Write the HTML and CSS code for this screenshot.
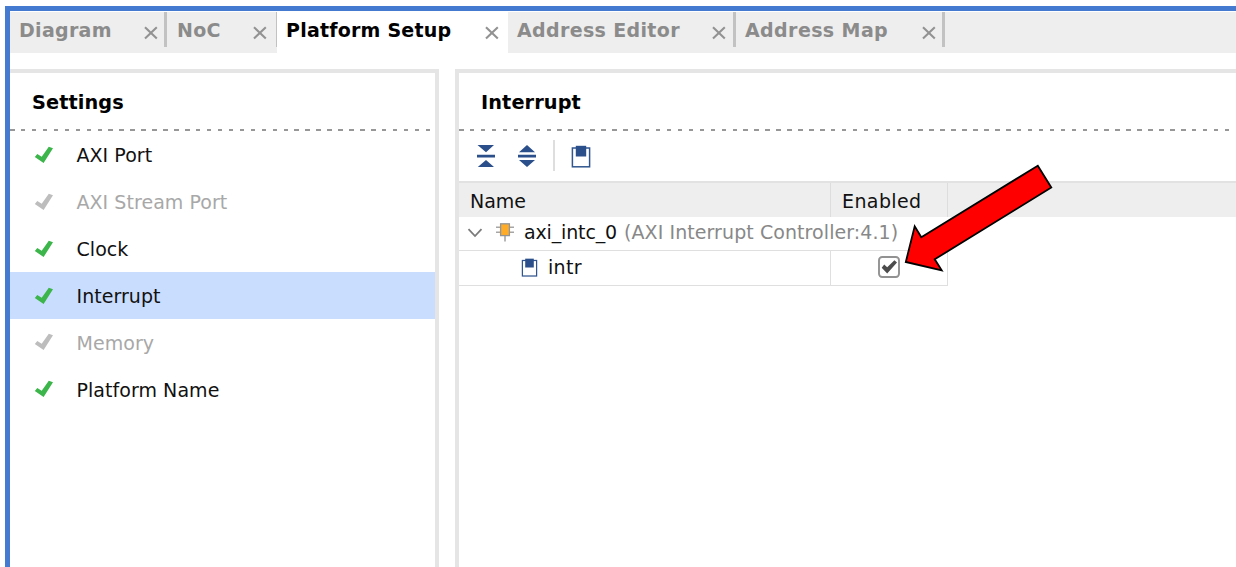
FILE: index.html
```html
<!DOCTYPE html>
<html lang="en">
<head>
<meta charset="utf-8">
<title>Platform Setup</title>
<link rel="stylesheet" href="styles.css">
</head>
<body>
<svg class="defs" width="0" height="0">
  <symbol id="tick" viewBox="0 0 20 18"><path d="M.8 11 3.3 8 7.7 10.8 14.8.8 19 2.3 9.6 17Z" fill="currentColor"/></symbol>
  <symbol id="close" viewBox="0 0 14 14"><path d="M1 1.2 12.8 12.4M12.8 1.2 1 12.4" stroke="currentColor" stroke-width="2.1" fill="none"/></symbol>
  <symbol id="port" viewBox="0 0 20 23"><rect x="1.4" y="3" width="17.2" height="18.8" fill="#fff" stroke="#31558f" stroke-width="1.5"/><rect x="4.8" y=".8" width="10.4" height="10.7" fill="#2b4f8a"/></symbol>
</svg>
<div class="window">
  <nav class="tabs">
    <div class="tab diagram"><span>Diagram</span><svg class="x"><use href="#close"/></svg></div>
    <div class="tab noc"><span>NoC</span><svg class="x"><use href="#close"/></svg></div>
    <div class="tab setup active"><span>Platform Setup</span><svg class="x"><use href="#close"/></svg></div>
    <div class="tab editor"><span>Address Editor</span><svg class="x"><use href="#close"/></svg></div>
    <div class="tab map"><span>Address Map</span><svg class="x"><use href="#close"/></svg></div>
  </nav>
  <main class="panes">
    <section class="settings">
      <h2>Settings</h2>
      <div class="dashes"></div>
      <ul>
        <li><svg class="tick"><use href="#tick"/></svg><span>AXI Port</span></li>
        <li class="off"><svg class="tick"><use href="#tick"/></svg><span>AXI Stream Port</span></li>
        <li><svg class="tick"><use href="#tick"/></svg><span>Clock</span></li>
        <li class="selected"><svg class="tick"><use href="#tick"/></svg><span>Interrupt</span></li>
        <li class="off"><svg class="tick"><use href="#tick"/></svg><span>Memory</span></li>
        <li><svg class="tick"><use href="#tick"/></svg><span>Platform Name</span></li>
      </ul>
    </section>
    <section class="detail">
      <h2>Interrupt</h2>
      <div class="dashes"></div>
      <div class="toolbar">
        <svg class="collapse" width="20" height="24" viewBox="0 0 20 24" fill="#2b4f8a"><path d="M1.5 1H18L10 8.2ZM1 10.7H19V13.6H1ZM1.8 23H18L10 16Z"/></svg>
        <svg class="expand" width="20" height="24" viewBox="0 0 20 24" fill="#2b4f8a"><path d="M2 8.2H18L10 1ZM1 10.7H19V13.6H1ZM2 16H18L10 23Z"/></svg>
        <i class="divider"></i>
        <svg class="ports"><use href="#port"/></svg>
      </div>
      <div class="thead"><span class="name">Name</span><span class="enabled">Enabled</span></div>
      <div class="row parent">
        <svg class="chevron" width="16" height="12" viewBox="0 0 16 12"><path d="M1.5 2.2 8 9 14.5 2.2" fill="none" stroke="#7b7b7b" stroke-width="1.8"/></svg>
        <svg class="chip" width="20" height="20" viewBox="0 0 20 20"><path d="M1 5.3H19M1 10.2H19M10 12V19.5" stroke="#a6a6a6" stroke-width="1.6"/><rect x="5.6" y="1.8" width="8.8" height="11.8" fill="#ffad29" stroke="#949494" stroke-width="1.3"/></svg>
        <span class="core">axi_intc_0</span><span class="type">(AXI Interrupt Controller:4.1)</span>
      </div>
      <div class="row child">
        <div class="cell"><svg class="port"><use href="#port"/></svg><span>intr</span></div>
        <div class="check"><svg width="24" height="24" viewBox="0 0 24 24"><rect x="2" y="2" width="20" height="20" rx="3.2" fill="#fff" stroke="#929292" stroke-width="1.9"/><path d="M4.7 12.7 7.2 9.4 10.2 12.2 17.4 5.2 20 7.5 10.2 18.5Z" fill="#4c4c4c"/></svg></div>
      </div>
    </section>
  </main>
</div>
<svg class="arrow" width="160" height="120" viewBox="900 155 160 120"><path d="M1037.8 165.7 921.3 237.3 914.7 226.3 905.8 262 941.7 270.3 934.7 259.3 1051.3 187.5Z" fill="#f00" stroke="#000" stroke-width="1.8"/></svg>
</body>
</html>
```
FILE: styles.css
```css
* { box-sizing: border-box; }
body { margin: 0; width: 1236px; height: 567px; overflow: hidden; background: #fff; color: #111; font: 19px/24px "DejaVu Sans", sans-serif; white-space: nowrap; }
.defs { position: absolute; }
svg { flex: none; display: block; }
.window { margin: 6px 0 0 5px; height: 561px; border: solid #447ad0; border-width: 5px 0 0 5px; display: flex; flex-direction: column; }
.tabs { display: flex; height: 42px; background: #eee; border-top: 1px solid #fff; flex: none; }
.tab { display: flex; justify-content: space-between; height: 35px; padding: 6px 6px 0 9px; border-right: 3px solid #c2c2c2; color: #8b8b8b; font-weight: bold; letter-spacing: .3px; }
.x { width: 14px; height: 14px; margin-top: 8px; color: #929292; }
.diagram { width: 157px; }
.noc { width: 110px; padding-left: 10px; border-right-width: 1px; padding-right: 9px; }
.setup { width: 231px; height: 41px; padding-right: 9px; border: 0; background: #fff; color: #000; letter-spacing: .22px; }
.editor { width: 228px; letter-spacing: .35px; padding-right: 7px; }
.map { width: 209px; letter-spacing: .4px; }
.panes { display: flex; gap: 16px; margin-top: 16px; flex: 1; }
.settings { width: 429px; border: solid #e5e5e5; border-width: 4px 4px 0 0; }
.detail { flex: 1; border: solid #e5e5e5; border-width: 4px 0 0 4px; }
h2 { margin: 0; height: 56px; padding: 18px 22px 0; font-size: 19.3px; line-height: 24px; color: #000; letter-spacing: .1px; }
.dashes { height: 2px; margin-right: 3px; background: repeating-linear-gradient(90deg, #979797 0 4.5px, #fff 4.5px 10.94px); }
ul { margin: 0; padding: .4px 0 0; list-style: none; }
li { display: flex; height: 46.9px; align-items: center; padding-left: 24px; gap: 22.5px; letter-spacing: .05px; }
li span { padding-top: 1px; }
.tick { width: 20px; height: 18px; color: #3cb54a; }
.off { color: #a8a8a8; }
.off .tick { color: #bdbdbd; }
.selected { background: #c9ddff; }
.toolbar { display: flex; height: 50px; padding: 13px 0 0 17px; }
.expand { margin-left: 21px; }
.divider { width: 2px; height: 31px; margin: -4px 16px 0 16px; background: #dedede; }
.ports { width: 20px; height: 23px; margin-top: 1px; }
.thead { display: flex; height: 36px; background: #eee; border-top: 2px solid #e2e2e2; line-height: 36px; }
.name { width: 372px; height: 34px; padding-left: 11px; border-right: 1px solid #ddd; }
.enabled { width: 117px; height: 34px; padding-left: 11px; border-right: 1px solid #ddd; letter-spacing: .4px; }
.row { display: flex; width: 489px; align-items: center; border-bottom: 1px solid #dfdfdf; }
.parent { height: 34px; padding: 0 0 3px 8px; }
.chevron { margin-top: 2px; }
.chip { margin-left: 12px; }
.core { margin-left: 9px; letter-spacing: -.15px; }
.type { margin-left: 7px; color: #888; letter-spacing: .08px; }
.child { height: 35px; border-right: 1px solid #dfdfdf; }
.cell { display: flex; align-items: center; align-self: stretch; width: 372px; padding: 0 0 2px 62px; gap: 10px; border-right: 1px solid #dfdfdf; }
.cell span { letter-spacing: .3px; }
.port { width: 17px; height: 19px; }
.check { margin-left: 46px; padding-bottom: 2px; }
.arrow { position: absolute; left: 900px; top: 155px; }
```
